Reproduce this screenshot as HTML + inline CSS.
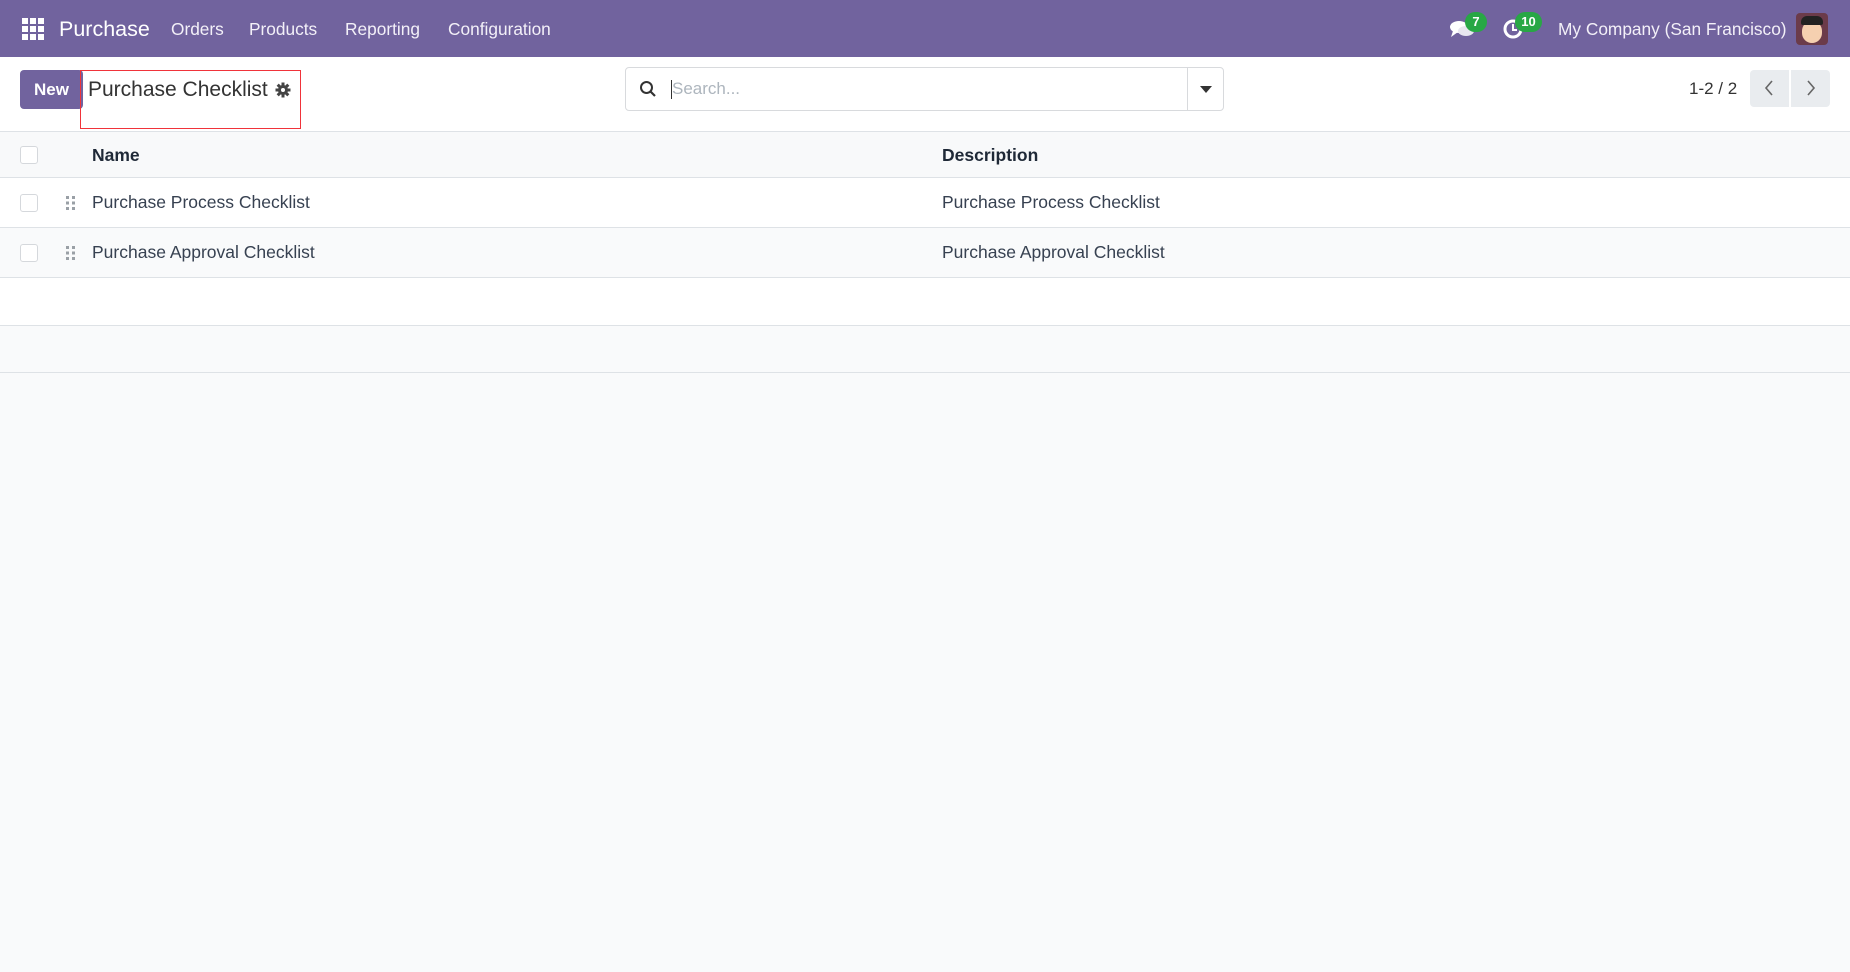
<!DOCTYPE html>
<html><head><meta charset="utf-8"><style>
*{box-sizing:border-box;margin:0;padding:0}
body{width:1850px;height:972px;overflow:hidden;background:#f9fafb;font-family:"Liberation Sans","DejaVu Sans",sans-serif;color:#374151;position:relative}
.nav{position:absolute;left:0;top:0;width:1850px;height:57px;background:#71639e;color:#fff}
.nav span{position:absolute;top:19px;font-size:17.3px;color:#f3f0f8}
.cp{position:absolute;top:57px;left:0;width:1850px;height:75px;background:#fff;border-bottom:1px solid #dee2e6}
.row{position:absolute;left:0;width:1850px;border-bottom:1px solid #dee2e6;font-size:17.5px}
.cb{position:absolute;left:20px;width:18px;height:18px;border:1px solid #d5d8dc;border-radius:3px;background:#fff}
.dh{position:absolute;left:66px;width:10px;height:14px}
</style></head><body>
<div class="nav">
<svg style="position:absolute;left:22px;top:18px" width="22" height="22" viewBox="0 0 22 22" fill="#fff"><rect x="0" y="0" width="6" height="6"/><rect x="8" y="0" width="6" height="6"/><rect x="16" y="0" width="6" height="6"/><rect x="0" y="8" width="6" height="6"/><rect x="8" y="8" width="6" height="6"/><rect x="16" y="8" width="6" height="6"/><rect x="0" y="16" width="6" height="6"/><rect x="8" y="16" width="6" height="6"/><rect x="16" y="16" width="6" height="6"/></svg>
<span style="left:59px;top:17px;font-size:21.5px;color:#fff">Purchase</span>
<span style="left:171px">Orders</span>
<span style="left:249px">Products</span>
<span style="left:345px">Reporting</span>
<span style="left:448px">Configuration</span>
<svg style="position:absolute;left:1449px;top:18px" width="26" height="22" viewBox="0 0 26 22" fill="#fff"><ellipse cx="10" cy="9" rx="9" ry="6"/><path d="M4 13 L2 19 L9 14Z"/><ellipse cx="17" cy="13" rx="8" ry="5" fill="#e8e6f0"/></svg>
<div style="position:absolute;left:1465px;top:12px;width:22px;height:20px;border-radius:10px;background:#28a745;color:#fff;font-size:13px;font-weight:bold;text-align:center;line-height:20px">7</div>
<svg style="position:absolute;left:1502px;top:18px" width="22" height="22" viewBox="0 0 22 22"><circle cx="11" cy="11" r="8" fill="none" stroke="#fff" stroke-width="3"/><path d="M11 6v6h4" stroke="#fff" stroke-width="2" fill="none"/></svg>
<div style="position:absolute;left:1515px;top:12px;width:27px;height:20px;border-radius:10px;background:#28a745;color:#fff;font-size:13px;font-weight:bold;text-align:center;line-height:20px">10</div>
<span style="left:1558px">My Company (San Francisco)</span>
<div style="position:absolute;left:1796px;top:13px;width:32px;height:32px;border-radius:4px;background:#6b3b4a;overflow:hidden"><div style="position:absolute;left:6px;top:8px;width:20px;height:22px;border-radius:10px;background:#f5d0b0"></div><div style="position:absolute;left:5px;top:3px;width:22px;height:9px;border-radius:6px 6px 2px 2px;background:#222"></div></div>
</div>
<div class="cp">
<div style="position:absolute;left:20px;top:13px;width:63px;height:39px;background:#71639e;border-radius:4px;color:#fff;font-weight:bold;font-size:17px;text-align:center;line-height:39px">New</div>
<div style="position:absolute;left:80px;top:13px;width:221px;height:59px;border:1.5px solid #f0333a"></div>
<div style="position:absolute;left:88px;top:21px;font-size:21px;color:#333">Purchase Checklist</div>
<svg style="position:absolute;left:275px;top:25px" width="16" height="16" viewBox="0 0 16 16"><g fill="#444"><circle cx="8" cy="8" r="5"/><rect x="6.5" y="0.5" width="3" height="15"/><rect x="0.5" y="6.5" width="15" height="3"/><rect x="6.5" y="0.5" width="3" height="15" transform="rotate(45 8 8)"/><rect x="6.5" y="0.5" width="3" height="15" transform="rotate(-45 8 8)"/></g><circle cx="8" cy="8" r="2" fill="#fff"/></svg>
<div style="position:absolute;left:625px;top:10px;width:599px;height:44px;border:1px solid #d8dadd;border-radius:4px;background:#fff">
<svg style="position:absolute;left:13px;top:12px" width="18" height="18" viewBox="0 0 18 18"><circle cx="7.5" cy="7.5" r="5.5" fill="none" stroke="#333" stroke-width="2"/><path d="M11.5 11.5L16 16" stroke="#333" stroke-width="2.2"/></svg>
<div style="position:absolute;left:45px;top:12px;width:1px;height:19px;background:#333"></div>
<span style="position:absolute;left:46px;top:11px;font-size:17px;color:#adb5bd">Search...</span>
<div style="position:absolute;left:561px;top:0;width:1px;height:42px;background:#d8dadd"></div>
<div style="position:absolute;left:574px;top:18px;border-left:6px solid transparent;border-right:6px solid transparent;border-top:7px solid #333"></div>
</div>
<div style="position:absolute;left:1689px;top:22px;font-size:17px;color:#333">1-2 / 2</div>
<div style="position:absolute;left:1750px;top:13px;width:39px;height:37px;background:#e9ecef;border-radius:4px 0 0 4px"></div>
<div style="position:absolute;left:1791px;top:13px;width:39px;height:37px;background:#e9ecef;border-radius:0 4px 4px 0"></div>
<svg style="position:absolute;left:1763px;top:22px" width="12" height="18" viewBox="0 0 12 18"><path d="M9 2L3 9l6 7" stroke="#666" stroke-width="1.6" fill="none"/></svg>
<svg style="position:absolute;left:1805px;top:22px" width="12" height="18" viewBox="0 0 12 18"><path d="M3 2l6 7-6 7" stroke="#666" stroke-width="1.6" fill="none"/></svg>
</div>
<div class="row" style="top:132px;height:46px;background:#f8f9fa"><div class="cb" style="top:14px"></div><b style="position:absolute;left:92px;top:13px;color:#1f2937">Name</b><b style="position:absolute;left:942px;top:13px;color:#1f2937">Description</b></div>
<div class="row" style="top:178px;height:50px;background:#fff"><div class="cb" style="top:16px"></div>
<svg class="dh" style="top:18px" viewBox="0 0 10 14" fill="#9aa0a6"><rect x="0" y="0" width="3" height="3"/><rect x="6" y="0" width="3" height="3"/><rect x="0" y="5.5" width="3" height="3"/><rect x="6" y="5.5" width="3" height="3"/><rect x="0" y="11" width="3" height="3"/><rect x="6" y="11" width="3" height="3"/></svg>
<span style="position:absolute;left:92px;top:14px">Purchase Process Checklist</span><span style="position:absolute;left:942px;top:14px">Purchase Process Checklist</span></div>
<div class="row" style="top:228px;height:50px;background:#f9fafb"><div class="cb" style="top:16px"></div>
<svg class="dh" style="top:18px" viewBox="0 0 10 14" fill="#9aa0a6"><rect x="0" y="0" width="3" height="3"/><rect x="6" y="0" width="3" height="3"/><rect x="0" y="5.5" width="3" height="3"/><rect x="6" y="5.5" width="3" height="3"/><rect x="0" y="11" width="3" height="3"/><rect x="6" y="11" width="3" height="3"/></svg>
<span style="position:absolute;left:92px;top:14px">Purchase Approval Checklist</span><span style="position:absolute;left:942px;top:14px">Purchase Approval Checklist</span></div>
<div class="row" style="top:278px;height:48px;background:#fff"></div>
<div class="row" style="top:326px;height:47px;background:#f9fafb"></div>
</body></html>
